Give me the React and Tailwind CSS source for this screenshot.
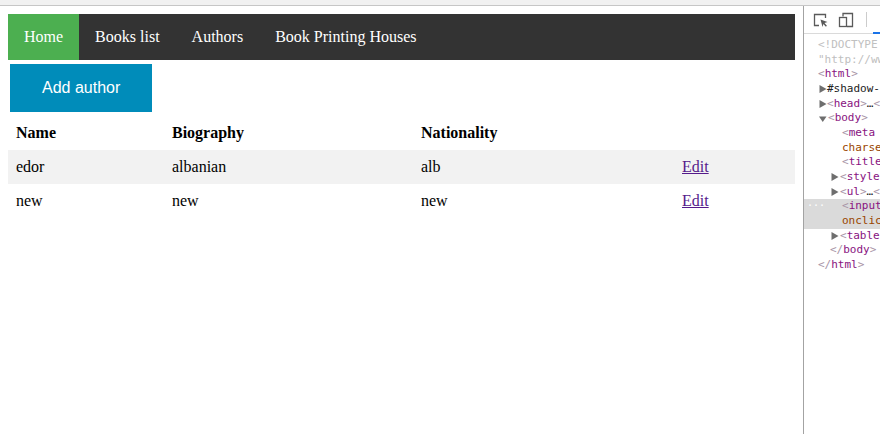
const authors = [
  { name: 'edor', bio: 'albanian', nat: 'alb' },
  { name: 'new', bio: 'new', nat: 'new' },
];

const navItems = ['Home', 'Books list', 'Authors', 'Book Printing Houses'];

const Tri = ({ open }) => (
  <svg width="8" height="8" viewBox="0 0 8 8" className="shrink-0">
    {open ? <path d="M0 1.5h7.5L3.75 7z" fill="#6e6e6e" /> : <path d="M0.5 0v8L7.5 4z" fill="#6e6e6e" />}
  </svg>
);

const B = ({ children }) => <span className="text-[#a894a6]">{children}</span>;
const T = ({ children }) => <span className="text-[#881280]">{children}</span>;
const A = ({ children }) => <span className="text-[#994500]">{children}</span>;

// lines of the elements panel
const lines = [
  { pl: 'pl-[14px]', body: <span className="text-[#c0c0c0]">&lt;!DOCTYPE</span> },
  { pl: 'pl-[14px]', body: <span className="text-[#c0c0c0]">"http://www</span> },
  { pl: 'pl-[14px]', body: <><B>&lt;</B><T>html</T><B>&gt;</B></> },
  { pl: 'pl-[15px]', tri: 'closed', body: <span className="text-[#222]">#shadow-root</span> },
  { pl: 'pl-[15px]', tri: 'closed', body: <><B>&lt;</B><T>head</T><B>&gt;</B><span className="text-[#222]">…</span><B>&lt;</B></> },
  { pl: 'pl-[15px]', tri: 'open', body: <><B>&lt;</B><T>body</T><B>&gt;</B></> },
  { pl: 'pl-[38px]', body: <><B>&lt;</B><T>meta</T></> },
  { pl: 'pl-[38px]', body: <A>charset</A> },
  { pl: 'pl-[38px]', body: <><B>&lt;</B><T>title</T></> },
  { pl: 'pl-[27px]', tri: 'closed', body: <><B>&lt;</B><T>style</T></> },
  { pl: 'pl-[27px]', tri: 'closed', body: <><B>&lt;</B><T>ul</T><B>&gt;</B><span className="text-[#222]">…</span><B>&lt;</B></> },
  { pl: 'pl-[38px]', sel: true, dots: true, body: <><B>&lt;</B><T>input</T></> },
  { pl: 'pl-[38px]', sel: true, body: <A>onclick</A> },
  { pl: 'pl-[27px]', tri: 'closed', body: <><B>&lt;</B><T>table</T></> },
  { pl: 'pl-[26px]', body: <><B>&lt;/</B><T>body</T><B>&gt;</B></> },
  { pl: 'pl-[14px]', body: <><B>&lt;/</B><T>html</T><B>&gt;</B></> },
];

const DevTools = () => (
  <div className="w-[77px] shrink-0 border-l border-[#a3a3a3] bg-white overflow-hidden">
    <div className="h-[28px] border-b border-[#dadada] flex items-center relative">
      <svg width="16" height="16" viewBox="0 0 16 16" className="ml-[9px]" fill="none" stroke="#5a5a5a" strokeWidth="1.3">
        <path d="M6 13.5H1.5v-11h11V6" />
        <path d="M7.5 7.5l7 2.6-3 1 2.4 2.6-1 1-2.5-2.6-.9 3z" fill="#5a5a5a" stroke="none" />
      </svg>
      <svg width="16" height="16" viewBox="0 0 16 16" className="ml-[9px]" fill="none" stroke="#5a5a5a" strokeWidth="1.3">
        <path d="M5 4.5V1.5h9.5v13H9" />
        <rect x="1.5" y="5.5" width="7" height="9" />
      </svg>
      <div className="ml-[12px] w-px h-[15px] bg-[#cccccc]" />
      <div className="absolute right-0 bottom-[-1px] w-[7px] h-[2px] bg-[#1a73e8]" />
    </div>
    <div className="pt-[4px] font-['DejaVu_Sans_Mono','Liberation_Mono',monospace] text-[11px] leading-[14.67px] whitespace-nowrap">
      {lines.map((l, i) => (
        <div key={i} className={`relative flex items-center ${l.pl} ${l.sel ? 'bg-[#dadada]' : ''}`}>
          {l.dots && <span className="absolute left-[3px] top-[-3px] text-[#ffffff] text-[10px]">...</span>}
          {l.tri && (
            <span className="w-[9px] flex">
              <Tri open={l.tri === 'open'} />
            </span>
          )}
          <span>{l.body}</span>
        </div>
      ))}
    </div>
  </div>
);

const App = () => {
  return (
    <div className="w-[880px] h-[434px] bg-white overflow-hidden flex flex-col">
      <div className="h-[6px] shrink-0 bg-[#f1f1f1] border-b border-[#c6c6c6]" />
      <div className="flex flex-1 min-h-0">
        <div className="flex-1 p-2 font-['Liberation_Serif',serif] text-[16px] text-black">
          <ul className="flex bg-[#333333]">
            {navItems.map((item, i) => (
              <li key={item}>
                <a className={`block px-4 py-[14px] leading-[18px] text-white ${i === 0 ? 'bg-[#4CAF50]' : ''}`}>
                  {item}
                </a>
              </li>
            ))}
          </ul>
          <button className="mx-[2px] my-1 px-8 py-[15px] leading-[18px] bg-[#008CBA] text-white font-['Liberation_Sans',Arial,sans-serif] text-[16px]">
            Add author
          </button>
          <table className="w-full table-fixed border-collapse">
            <thead>
              <tr>
                <th className="w-[156px] p-2 text-left leading-[18px] font-bold">Name</th>
                <th className="w-[249px] p-2 text-left leading-[18px] font-bold">Biography</th>
                <th className="w-[261px] p-2 text-left leading-[18px] font-bold">Nationality</th>
                <th className="p-2"></th>
              </tr>
            </thead>
            <tbody>
              {authors.map((a, i) => (
                <tr key={i} className={i % 2 === 0 ? 'bg-[#f2f2f2]' : ''}>
                  <td className="p-2 leading-[18px]">{a.name}</td>
                  <td className="p-2 leading-[18px]">{a.bio}</td>
                  <td className="p-2 leading-[18px]">{a.nat}</td>
                  <td className="p-2 leading-[18px]">
                    <a className="text-[#551A8B] underline cursor-pointer">Edit</a>
                  </td>
                </tr>
              ))}
            </tbody>
          </table>
        </div>
        <DevTools />
      </div>
    </div>
  );
};

export default App;
